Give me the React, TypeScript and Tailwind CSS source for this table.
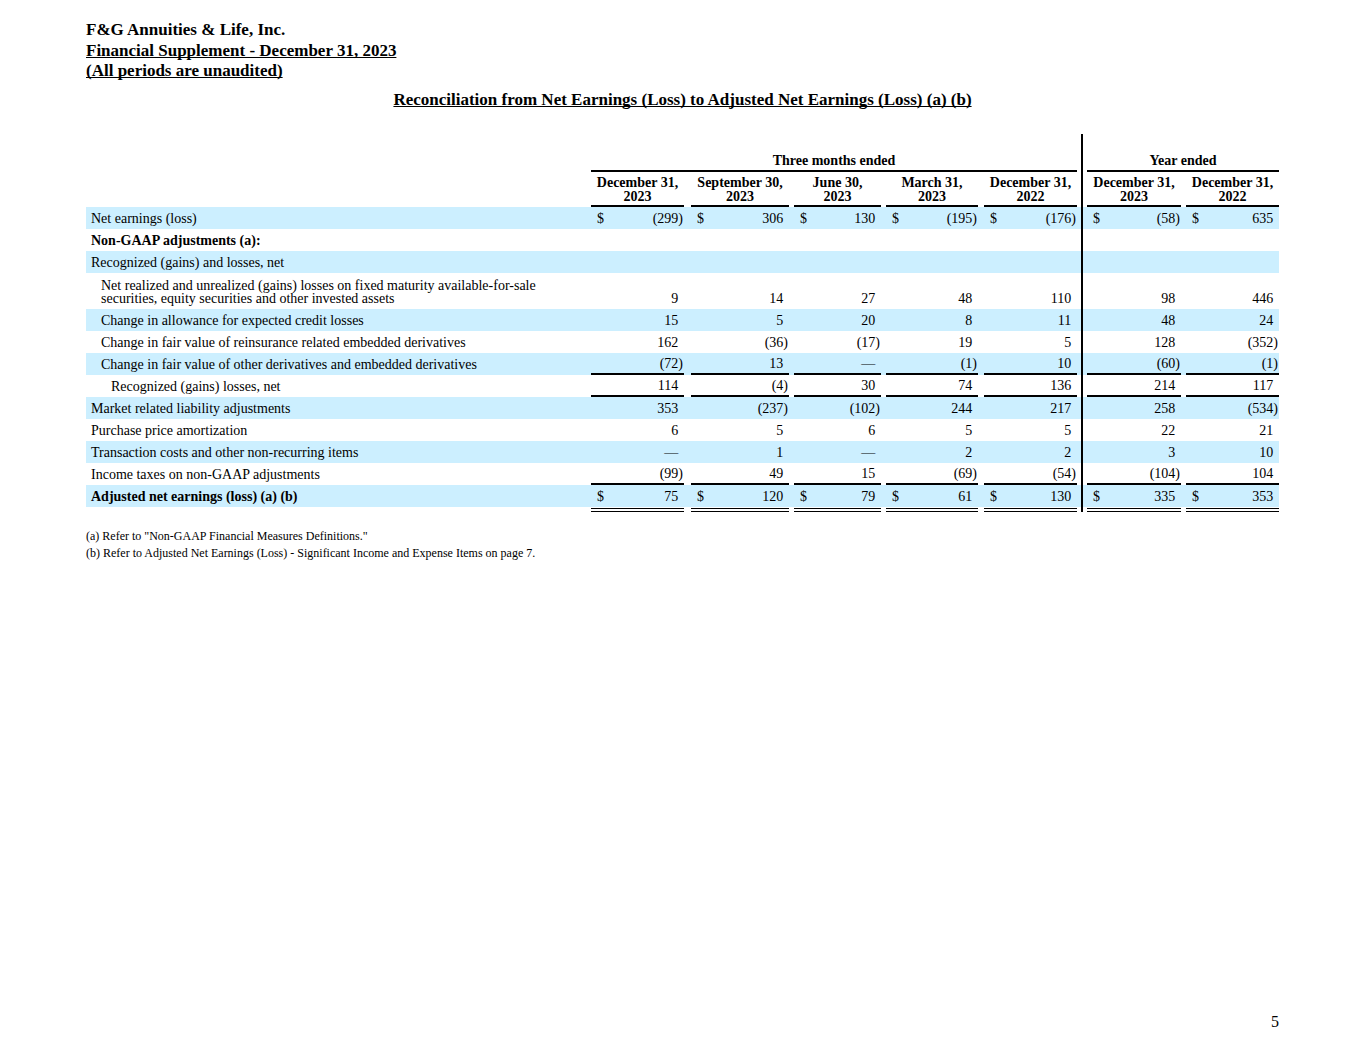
import React from 'react';

// column widths + left gaps, measured from the page (label column is 505px)
const widths = ['w-[93px]', 'w-[98px]', 'w-[87px]', 'w-[92px]', 'w-[93px]', 'w-[94px]', 'w-[93px]'];
const gaps = ['ml-0', 'ml-[7px]', 'ml-[5px]', 'ml-[5px]', 'ml-[6px]', 'ml-0', 'ml-[5px]'];

const headers = [
  ['December 31,', '2023'],
  ['September 30,', '2023'],
  ['June 30,', '2023'],
  ['March 31,', '2023'],
  ['December 31,', '2022'],
  ['December 31,', '2023'],
  ['December 31,', '2022'],
];

type RowDef = {
  label: string;
  indent?: 0 | 1 | 2;
  bold?: boolean;
  values?: string[];
  dollar?: boolean;
  rule?: boolean;
  tall?: boolean;
  label2?: string;
};

const rows: RowDef[] = [
  { label: 'Net earnings (loss)', values: ['(299)', '306', '130', '(195)', '(176)', '(58)', '635'], dollar: true },
  { label: 'Non-GAAP adjustments (a):', bold: true },
  { label: 'Recognized (gains) and losses, net' },
  {
    label: 'Net realized and unrealized (gains) losses on fixed maturity available-for-sale',
    label2: 'securities, equity securities and other invested assets',
    indent: 1,
    tall: true,
    values: ['9', '14', '27', '48', '110', '98', '446'],
  },
  { label: 'Change in allowance for expected credit losses', indent: 1, values: ['15', '5', '20', '8', '11', '48', '24'] },
  { label: 'Change in fair value of reinsurance related embedded derivatives', indent: 1, values: ['162', '(36)', '(17)', '19', '5', '128', '(352)'] },
  { label: 'Change in fair value of other derivatives and embedded derivatives', indent: 1, values: ['(72)', '13', '—', '(1)', '10', '(60)', '(1)'], rule: true },
  { label: 'Recognized (gains) losses, net', indent: 2, values: ['114', '(4)', '30', '74', '136', '214', '117'], rule: true },
  { label: 'Market related liability adjustments', values: ['353', '(237)', '(102)', '244', '217', '258', '(534)'] },
  { label: 'Purchase price amortization', values: ['6', '5', '6', '5', '5', '22', '21'] },
  { label: 'Transaction costs and other non-recurring items', values: ['—', '1', '—', '2', '2', '3', '10'] },
  { label: 'Income taxes on non-GAAP adjustments', values: ['(99)', '49', '15', '(69)', '(54)', '(104)', '104'], rule: true },
  { label: 'Adjusted net earnings (loss) (a) (b)', bold: true, values: ['75', '120', '79', '61', '130', '335', '353'], dollar: true },
];

const Divider = () => (
  <div className="w-[10px] flex justify-center shrink-0">
    <div className="w-[2px] bg-black" />
  </div>
);

const Num = ({ v }: { v: string }) => (
  <span>
    {v}
    {v && !v.endsWith(')') ? <span className="invisible">)</span> : null}
  </span>
);

const DataRow = ({ row, i }: { row: RowDef; i: number }) => {
  const shade = i % 2 === 0 ? 'bg-[#ccefff]' : 'bg-white';
  const indent = row.indent === 2 ? 'pl-[25px]' : row.indent === 1 ? 'pl-[15px]' : 'pl-[5px]';
  const height = row.tall ? 'h-[36px]' : 'h-[22px]';
  const align = row.tall ? 'items-end pb-[4px]' : 'items-center pt-[2px]';

  const cells = widths.map((w, c) => {
    const v = row.values ? row.values[c] : '';
    return (
      <div
        key={c}
        className={`${w} ${gaps[c]} shrink-0 flex ${align} justify-between pl-[6px] pr-[1px] ${
          row.rule ? 'border-b-2 border-black' : ''
        }`}
      >
        <span>{row.dollar ? '$' : ''}</span>
        <Num v={v} />
      </div>
    );
  });

  return (
    <div className={`flex ${height} ${shade} leading-[13px]`}>
      <div className={`w-[505px] shrink-0 flex flex-col ${row.tall ? 'justify-end pb-[4px]' : 'justify-center pt-[2px]'} ${indent} ${row.bold ? 'font-bold' : ''}`}>
        <span>{row.label}</span>
        {row.label2 ? <span>{row.label2}</span> : null}
      </div>
      {cells.slice(0, 5)}
      <Divider />
      {cells.slice(5)}
    </div>
  );
};

export default function App() {
  return (
    <div className="w-[1365px] h-[1055px] bg-white text-black font-['Liberation_Serif','Times_New_Roman',serif] flex flex-col pl-[86px] pt-[20px] pb-[23px]">
      <div className="text-[17px] font-bold leading-[20.5px] [text-decoration-skip-ink:none]">
        <div>F&amp;G Annuities &amp; Life, Inc.</div>
        <div className="underline">Financial Supplement - December 31, 2023</div>
        <div className="underline">(All periods are unaudited)</div>
      </div>
      <div className="w-[1193px] mt-[8px] text-center text-[17px] font-bold leading-[20px] underline [text-decoration-skip-ink:none]">
        Reconciliation from Net Earnings (Loss) to Adjusted Net Earnings (Loss) (a) (b)
      </div>

      <div className="w-[1193px] mt-[24px] text-[14px]">
        {/* period groups */}
        <div className="flex h-[38px] font-bold leading-[14px]">
          <div className="w-[505px] shrink-0" />
          <div className="w-[486px] shrink-0 flex items-end justify-center pb-[2px] border-b-2 border-black">
            Three months ended
          </div>
          <Divider />
          <div className="w-[192px] shrink-0 flex items-end justify-center pb-[2px] border-b-2 border-black">
            Year ended
          </div>
        </div>

        {/* column dates */}
        <div className="flex h-[35px] font-bold leading-[14px]">
          <div className="w-[505px] shrink-0" />
          {headers.slice(0, 5).map((h, c) => (
            <div key={c} className={`${widths[c]} ${gaps[c]} shrink-0 flex flex-col items-center justify-end pb-[1px] border-b-2 border-black`}>
              <span>{h[0]}</span>
              <span>{h[1]}</span>
            </div>
          ))}
          <Divider />
          {headers.slice(5).map((h, c) => (
            <div key={c} className={`${widths[c + 5]} ${gaps[c + 5]} shrink-0 flex flex-col items-center justify-end pb-[1px] border-b-2 border-black`}>
              <span>{h[0]}</span>
              <span>{h[1]}</span>
            </div>
          ))}
        </div>

        {rows.map((r, i) => (
          <DataRow key={i} row={r} i={i} />
        ))}

        {/* double rule under the totals */}
        <div className="flex h-[5px]">
          <div className="w-[505px] shrink-0" />
          {widths.slice(0, 5).map((w, c) => (
            <div key={c} className={`${w} ${gaps[c]} shrink-0 mt-[1px] h-[4px] border-y border-black`} />
          ))}
          <Divider />
          {widths.slice(5).map((w, c) => (
            <div key={c} className={`${w} ${gaps[c + 5]} shrink-0 mt-[1px] h-[4px] border-y border-black`} />
          ))}
        </div>
      </div>

      <div className="mt-[16px] text-[12px] leading-[17px]">
        <div>(a) Refer to "Non-GAAP Financial Measures Definitions."</div>
        <div>(b) Refer to Adjusted Net Earnings (Loss) - Significant Income and Expense Items on page 7.</div>
      </div>

      <div className="mt-auto w-[1193px] text-right text-[16px] leading-[20px]">5</div>
    </div>
  );
}
